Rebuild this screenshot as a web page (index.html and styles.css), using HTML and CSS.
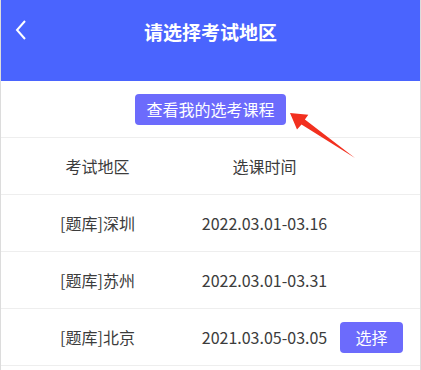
FILE: index.html
```html
<!DOCTYPE html>
<html lang="zh-CN">

<head>
    <meta charset="UTF-8">
    <meta name="viewport" content="width=device-width, initial-scale=1.0">
    <title>请选择考试地区</title>
    <link rel="stylesheet" href="styles.css">
</head>

<body>
    <div class="page">
        <header class="topbar">
            <div class="titlerow">
                <svg class="back" width="12" height="20" viewBox="0 0 12 20">
                    <polyline points="10,1 2,10 10,19" fill="none" stroke="#fff" stroke-width="2" />
                </svg>
                <h1>请选择考试地区</h1>
            </div>
        </header>

        <div class="mine">
            <button class="btn">查看我的选考课程</button>
        </div>

        <div class="table">
            <div class="row head">
                <span>考试地区</span>
                <span>选课时间</span>
                <span></span>
            </div>
            <div class="row">
                <span>[题库]深圳</span>
                <span>2022.03.01-03.16</span>
                <span></span>
            </div>
            <div class="row">
                <span>[题库]苏州</span>
                <span>2022.03.01-03.31</span>
                <span></span>
            </div>
            <div class="row">
                <span>[题库]北京</span>
                <span>2021.03.05-03.05</span>
                <span><button class="btn small">选择</button></span>
            </div>
        </div>

        <!-- red arrow pointing at the button -->
        <svg class="arrow" width="421" height="370" viewBox="0 0 421 370">
            <polygon points="290,113 308.3,114.7 304.9,119.6 355,158 301.5,124.6 297,129.5" fill="#f2301f" />
        </svg>
    </div>
</body>

</html>
```

FILE: styles.css
```css
* {
    box-sizing: border-box;
}

body {
    margin: 0;
    font-family: "Noto Sans CJK SC", "Noto Sans", sans-serif;
    background-color: #fff;
}

.page {
    position: relative;
    width: 421px;
    height: 370px;
    overflow: hidden;
    border-left: 1px solid #dcdcdc;
    border-right: 1px solid #dcdcdc;
}

.topbar {
    height: 81px;
    margin: 0 -1px;
    background-color: #4a64fe;
}

.titlerow {
    height: 62px;
    display: flex;
    justify-content: center;
    align-items: center;
    position: relative;
}

.back {
    position: absolute;
    left: 15px;
    top: 20px;
}

h1 {
    margin: 0;
    color: #fff;
    font-size: 19px;
    font-weight: bold;
}

.mine {
    height: 57px;
    display: flex;
    justify-content: center;
    padding-top: 13px;
    border-bottom: 1px solid #eeeeee;
}

.btn {
    height: 31px;
    padding: 0 11px;
    border: none;
    border-radius: 4px;
    background-color: #6c6bfc;
    color: #fff;
    font-family: inherit;
    font-size: 16px;
    line-height: 31px;
}

.btn.small {
    width: 63px;
    padding: 0;
}

.row {
    display: grid;
    grid-template-columns: 193px 141px 1fr;
    align-items: center;
    height: 57px;
    border-bottom: 1px solid #eeeeee;
    color: #3c3c3c;
    font-size: 16px;
}

.row>span {
    text-align: center;
}

.row>span:last-child {
    text-align: left;
    padding-left: 5px;
}

.arrow {
    position: absolute;
    left: -1px;
    top: 0;
    pointer-events: none;
}
```
